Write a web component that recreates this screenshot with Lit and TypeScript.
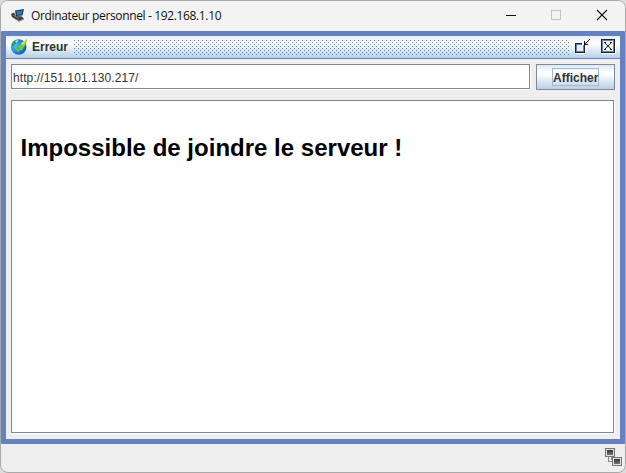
import { LitElement, html, css } from "lit";
import { customElement } from "lit/decorators.js";

@customElement("app-root")
export class AppRoot extends LitElement {
  static styles = css`
    :host {
      display: block;
      width: 626px;
      height: 473px;
      background: #dcdcdc;
      font-family: "Liberation Sans", Arial, sans-serif;
    }
    * { box-sizing: border-box; }
    svg { display: block; flex: none; }
    .window {
      display: flex;
      flex-direction: column;
      width: 626px;
      height: 473px;
      border: 1px solid #a9a9a9;
      border-radius: 8px;
      background: #eeeeee;
      overflow: hidden;
    }
    .titlebar {
      display: flex;
      align-items: center;
      height: 30px;
      flex: none;
      padding-left: 9px;
      background: #f3f3f3;
    }
    .title {
      flex: 1;
      margin-left: 5px;
      font: 12px/16px "Open Sans", "Noto Sans", sans-serif;
      letter-spacing: -0.36px;
      color: #111;
      white-space: nowrap;
    }
    .frame {
      display: flex;
      flex-direction: column;
      height: 413px;
      flex: none;
      border: 5px solid #6382bf;
      border-radius: 1px;
      background: #eeeeee;
    }
    .bar {
      display: flex;
      align-items: center;
      height: 23px;
      flex: none;
      padding: 0 3px 0 4px;
      border-bottom: 1px solid #6382bf;
      background: linear-gradient(#e6eef7, #ffffff 30%, #ffffff 35%, #b8cfe5);
    }
    .name {
      width: 42px;
      margin-left: 4px;
      padding-top: 1px;
      font-size: 12px;
      line-height: 15px;
      font-weight: bold;
      color: #333;
    }
    .grip {
      flex: none;
      width: 496px;
      height: 15px;
      margin: 1px 0 0 0;
      background-image:
        conic-gradient(from 270deg at 1px 1px, #5b7fd0 90deg, transparent 0),
        conic-gradient(from 270deg at 1px 1px, #5b7fd0 90deg, transparent 0);
      background-size: 4px 4px;
      background-position: 0 0, 2px 2px;
    }
    .minimise { margin-left: 4px; }
    .close { margin-left: 11px; }
    .body {
      display: flex;
      flex-direction: column;
      flex: 1;
      gap: 10px;
      padding: 5px 5px 6px;
    }
    .row { display: flex; gap: 6px; height: 26px; }
    .field, .page {
      border: 1px solid #7a8a99;
      background: #fff;
      box-shadow: 1px 1px #fff;
    }
    .field {
      width: 519px;
      height: 25px;
      padding: 1px 0 0 1px;
      font-size: 12px;
      line-height: 24px;
      letter-spacing: 0.09px;
      color: #333;
    }
    .button {
      display: flex;
      align-items: center;
      justify-content: center;
      flex: 1;
      border: 1px solid #7a8a99;
      background: linear-gradient(#dde8f3, #ffffff 30%, #ffffff 38%, #b8cfe5);
    }
    .label {
      width: 47px;
      height: 18px;
      border: 1px solid #a3b8cc;
      font-size: 12px;
      line-height: 18px;
      font-weight: bold;
      text-align: center;
      white-space: nowrap;
      color: #333;
    }
    .page { flex: 1; padding: 33px 0 0 8.5px; margin-right: 1px; }
    .message {
      margin: 0;
      font-size: 24px;
      line-height: 28px;
      letter-spacing: 0.01px;
      font-weight: bold;
      color: #000;
      white-space: nowrap;
    }
    .status {
      display: flex;
      flex: 1;
      justify-content: flex-end;
      padding: 4px 2px 0 0;
    }
  `;

  render() {
    return html`
      <div class="window">
        <div class="titlebar">
          <svg width="16" height="16" viewBox="0 0 16 16">
            <path d="M5 2.5L14 1L12.5 7.5L6 8Z" fill="#26333e" />
            <path d="M6.3 3.3L12.8 2.2L11.6 6.5L7 7Z" fill="#2479c4" />
            <path d="M1 6L4 4.5L6 8L12 8.5L14 11L9 13.5L2 9Z" fill="#3b3f45" />
            <path d="M4 10L9 12.5L13.5 10.5L14 11.5L9 14Z" fill="#8e9499" />
            <path d="M3 7L9 10.5" stroke="#757f87" />
          </svg>
          <div class="title">Ordinateur personnel - 192.168.1.10</div>
          <svg width="135" height="30" viewBox="490 1 135 30">
            <path d="M506 15.5H516" stroke="#111" />
            <rect x="551.5" y="10.5" width="9" height="9" fill="none" stroke="#c4c4c4" />
            <path d="M597 10L607 20M607 10L597 20" stroke="#111" stroke-width="1.1" />
          </svg>
        </div>
        <div class="frame">
          <div class="bar">
            <svg width="18" height="18" viewBox="0 0 18 18">
              <defs>
                <radialGradient id="sea" cx="30%" cy="40%" r="75%">
                  <stop offset="0" stop-color="#45c5ff" />
                  <stop offset="1" stop-color="#0754bd" />
                </radialGradient>
              </defs>
              <circle cx="8.7" cy="9" r="7.8" fill="url(#sea)" />
              <path d="M2 5L5 2L8 2L7 4.5L5 6L4 8L1.5 7.5Z" fill="#2f9f52" />
              <path d="M5 7L8 10L10 13L8.5 14L5 11Z" fill="#62c83c" />
              <path d="M9 8.5L12 5L17 1L16 6L14 9L12 12L10 12Z" fill="#79cf2c" />
              <path d="M10.5 6L16.5 1L14 6.5Z" fill="#d0ee50" />
              <path d="M5 3L8 2L7 5Z" fill="#b8e9ff" />
            </svg>
            <div class="name">Erreur</div>
            <div class="grip"></div>
            <svg class="minimise" width="16" height="16" viewBox="0 0 16 16" shape-rendering="crispEdges">
              <path d="M2 5h10v10h-10z" fill="#fff" />
              <path d="M1 4h10v10h-10z" fill="#222" />
              <path d="M2 5h8v8h-8z" fill="#6382bf" />
              <path d="M3 6h6v6h-6z" fill="#e8eff7" />
              <path d="M8 0h7v6h-7z" fill="#f4f8fb" />
              <path d="M10 2h1v3h3v1h-4zM11 4h1v1h-1zM12 3h1v1h-1zM13 2h1v1h-1zM14 1h1v1h-1zM15 0h1v1h-1z" fill="#111" />
            </svg>
            <svg class="close" width="16" height="16" viewBox="0 0 16 16" shape-rendering="crispEdges">
              <path d="M1 1h14v14h-14z" fill="#fff" />
              <path d="M0 0h14v14h-14z" fill="#222" />
              <path d="M1 1h12v12h-12z" fill="#6382bf" />
              <path d="M2 2h10v10h-10z" fill="#eaf1f8" />
              <path d="M3 3h1v1h-1zM4 3h1v2h-1zM5 5h1v1h-1zM6 6h2v2h-2zM8 5h1v1h-1zM9 3h1v2h-1zM10 3h1v1h-1zM5 8h1v1h-1zM4 9h1v2h-1zM3 10h1v1h-1zM8 8h1v1h-1zM9 9h1v2h-1zM10 10h1v1h-1z" fill="#222" />
            </svg>
          </div>
          <div class="body">
            <div class="row">
              <div class="field">http://151.101.130.217/</div>
              <div class="button"><div class="label">Afficher</div></div>
            </div>
            <div class="page"><h1 class="message">Impossible de joindre le serveur !</h1></div>
          </div>
        </div>
        <div class="status">
          <svg width="18" height="19" viewBox="0 0 18 19" shape-rendering="crispEdges">
            <defs>
              <linearGradient id="screen" x2="0" y2="1">
                <stop offset="0" stop-color="#333" />
                <stop offset="1" stop-color="#777" />
              </linearGradient>
            </defs>
            <path d="M3.5 9V13.5H8M6.5 9V12" fill="none" stroke="#888" />
            <rect x="0.5" y="0.5" width="9" height="8" fill="#ddd" stroke="#777" />
            <rect x="2" y="2" width="6" height="5" fill="url(#screen)" />
            <rect x="7.5" y="9.5" width="9" height="8" fill="#ddd" stroke="#777" />
            <rect x="9" y="11" width="6" height="5" fill="url(#screen)" />
          </svg>
        </div>
      </div>
    `;
  }
}
